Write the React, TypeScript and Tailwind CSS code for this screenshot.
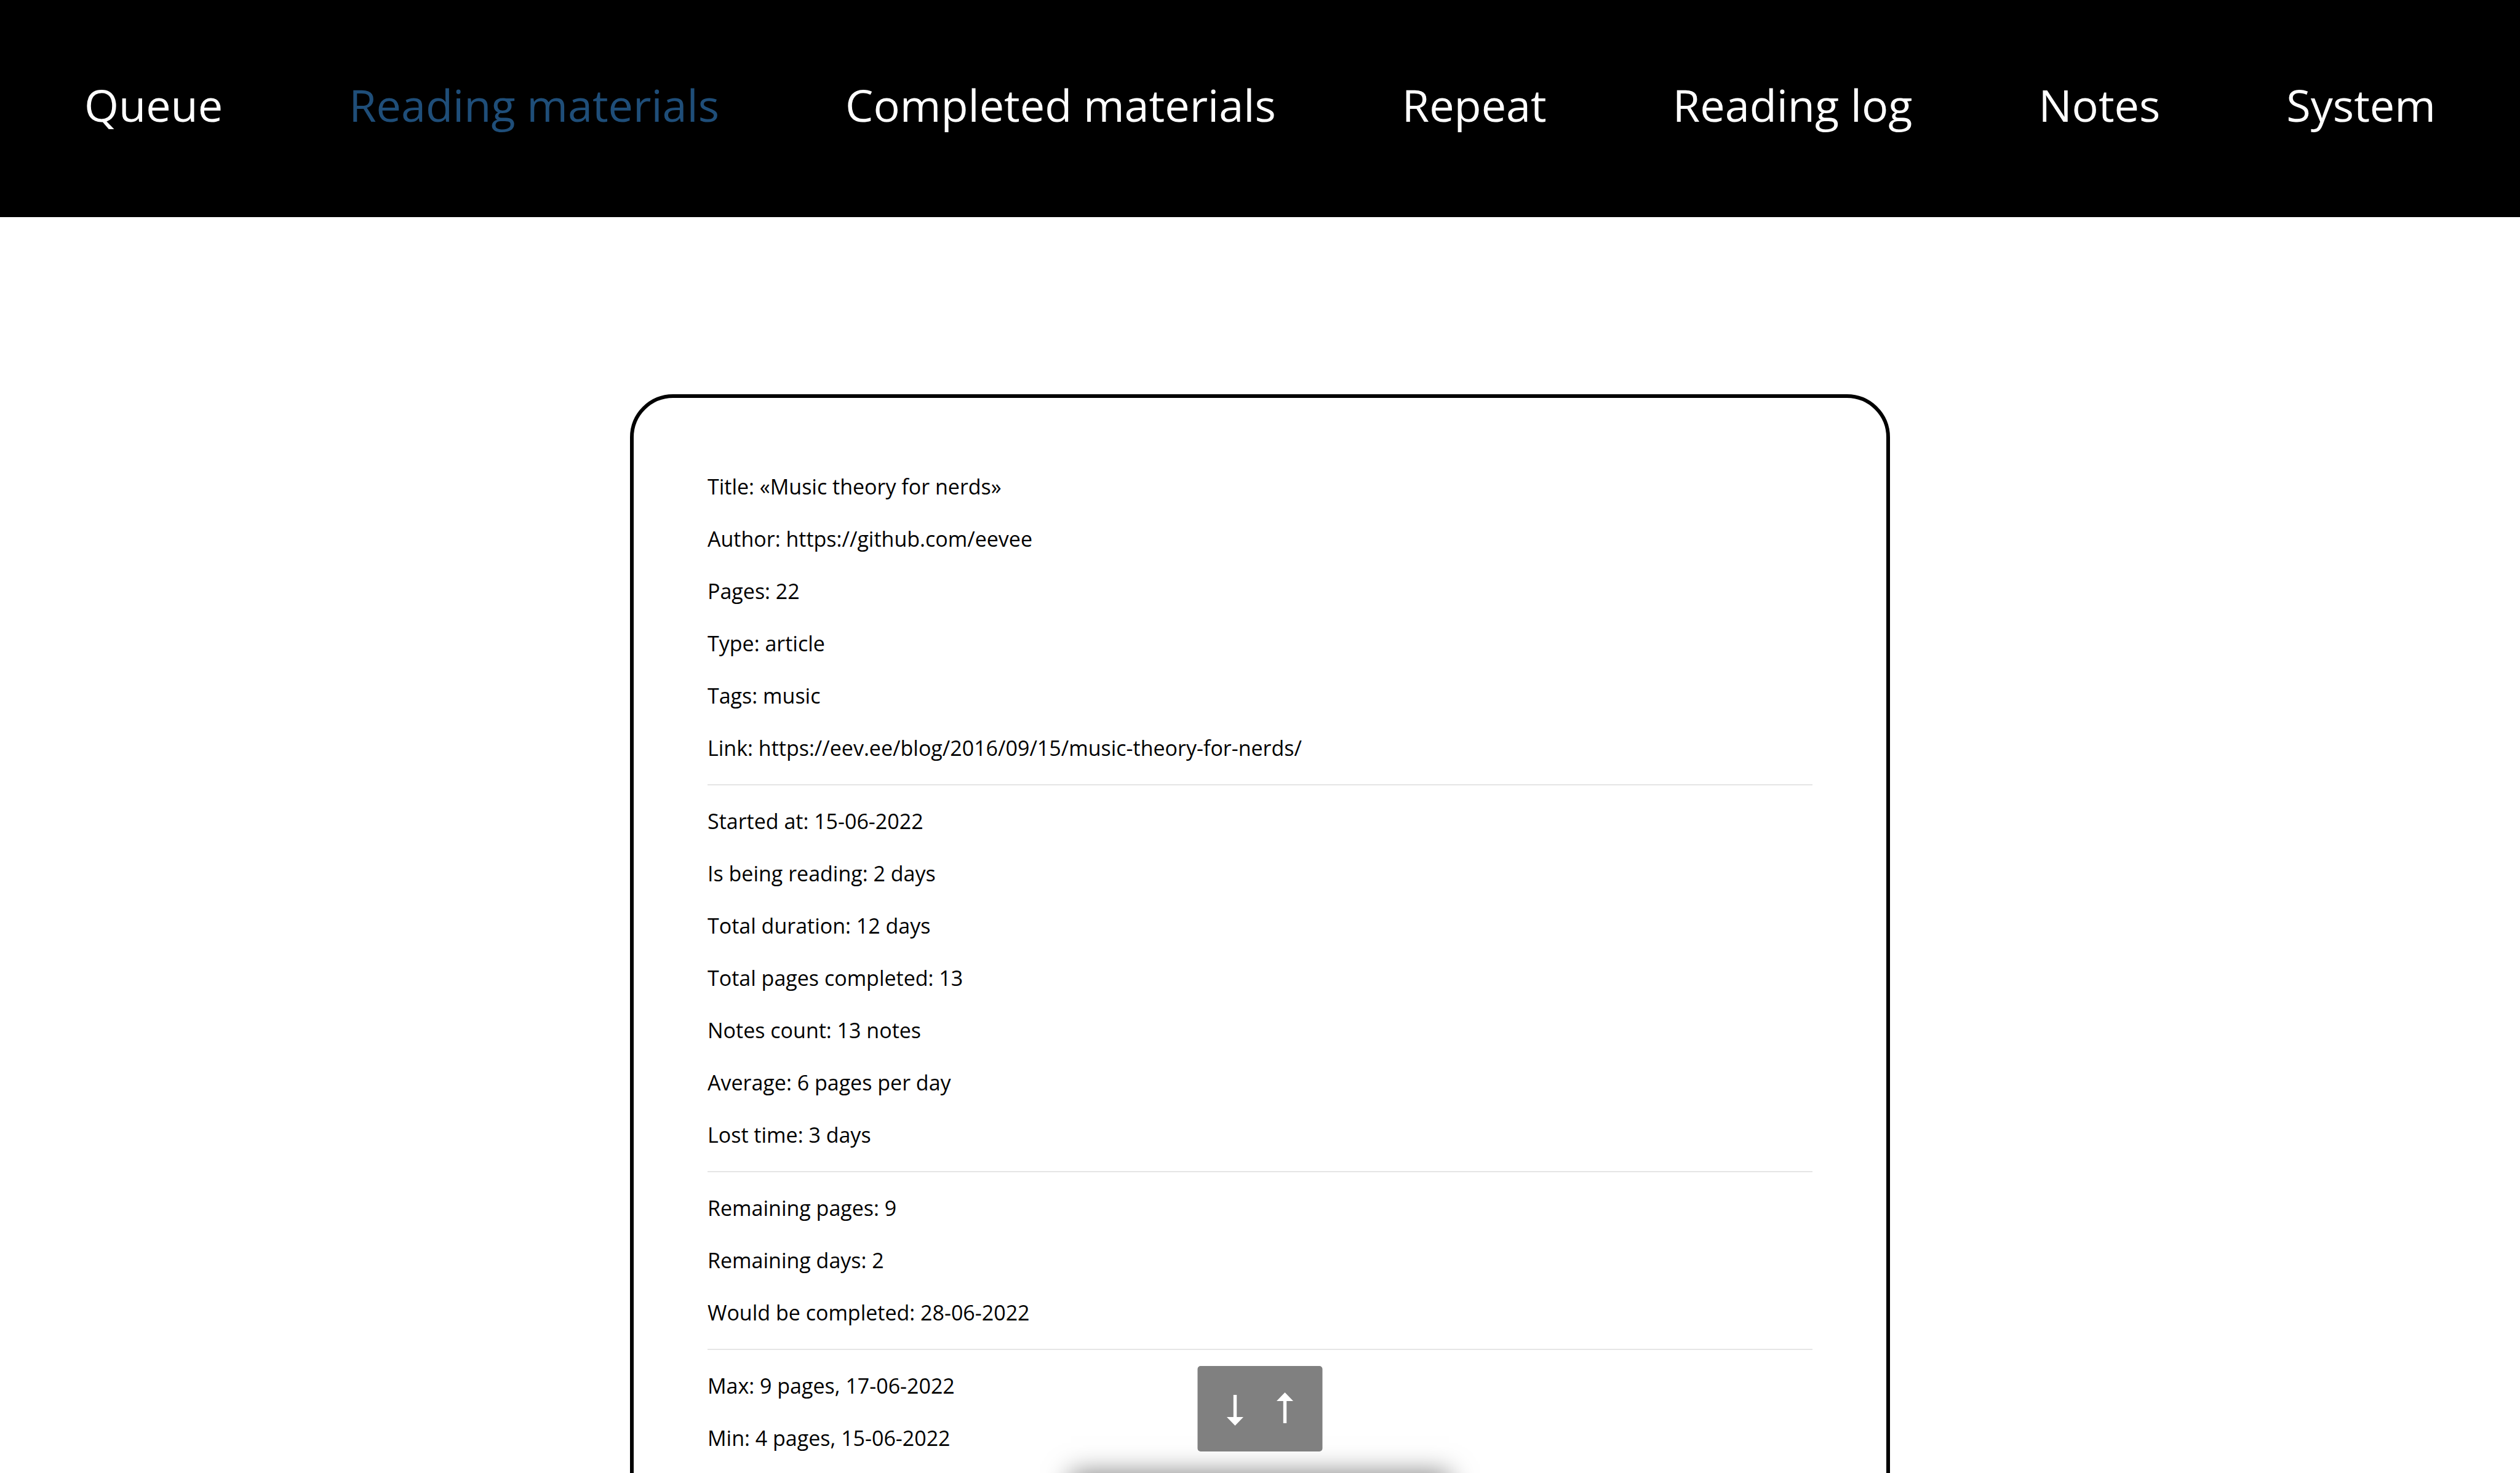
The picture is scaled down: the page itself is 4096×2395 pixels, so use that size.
import React from "react";

const navItems = [
  "Queue",
  "Reading materials",
  "Completed materials",
  "Repeat",
  "Reading log",
  "Notes",
  "System",
];

const sections: string[][] = [
  [
    "Title: «Music theory for nerds»",
    "Author: https://github.com/eevee",
    "Pages: 22",
    "Type: article",
    "Tags: music",
    "Link: https://eev.ee/blog/2016/09/15/music-theory-for-nerds/",
  ],
  [
    "Started at: 15-06-2022",
    "Is being reading: 2 days",
    "Total duration: 12 days",
    "Total pages completed: 13",
    "Notes count: 13 notes",
    "Average: 6 pages per day",
    "Lost time: 3 days",
  ],
  ["Remaining pages: 9", "Remaining days: 2", "Would be completed: 28-06-2022"],
  ["Max: 9 pages, 17-06-2022", "Min: 4 pages, 15-06-2022"],
];

function Arrow({ up = false }: { up?: boolean }) {
  return (
    <svg viewBox="0 0 28 54" className="h-[54px] w-7" fill="#fff" aria-hidden="true">
      {up ? (
        <path d="M14 0 27.500 14H16.700V50H11.300V14H.5Z" />
      ) : (
        <path d="M11.300 4H16.700V40H27.500L14 54 .5 40H11.300Z" />
      )}
    </svg>
  );
}

export default function App() {
  return (
    <div className="h-screen overflow-hidden bg-white font-['Open_Sans',sans-serif] text-black">
      <header className="bg-black">
        <nav className="flex h-[353px] items-center justify-between px-[137px] pb-3.5">
          {navItems.map((item) => (
            <a
              key={item}
              href="#"
              className={
                item === "Reading materials"
                  ? "text-[72px] whitespace-nowrap text-[#1f4e79]"
                  : "text-[72px] whitespace-nowrap text-white"
              }
            >
              {item}
            </a>
          ))}
        </nav>
      </header>

      <main className="mx-auto mt-[288px] w-1/2 rounded-[70px] border-6 border-black p-[120px]">
        {sections.map((rows, i) => (
          <section
            key={rows[0]}
            className={
              i === 0
                ? "flex flex-col gap-9"
                : "mt-[34px] flex flex-col gap-9 border-t-2 border-[#e5e5e5] pt-[34px]"
            }
          >
            {rows.map((row) => (
              <p key={row} className="text-[34px] leading-[49px]">
                {row}
              </p>
            ))}
          </section>
        ))}
      </main>

      <div className="fixed bottom-[35px] left-1/2 z-10 flex h-[139px] w-[203px] -translate-x-1/2 items-center justify-center gap-[53px] rounded-[5px] bg-[#808080]">
        <button type="button" aria-label="Scroll to bottom">
          <Arrow />
        </button>
        <button type="button" aria-label="Scroll to top">
          <Arrow up />
        </button>
      </div>

      <div className="fixed top-full left-1/2 h-40 w-[616px] -translate-x-1/2 bg-white shadow-[0_0_40px_rgba(0,0,0,0.5)]" />
    </div>
  );
}
